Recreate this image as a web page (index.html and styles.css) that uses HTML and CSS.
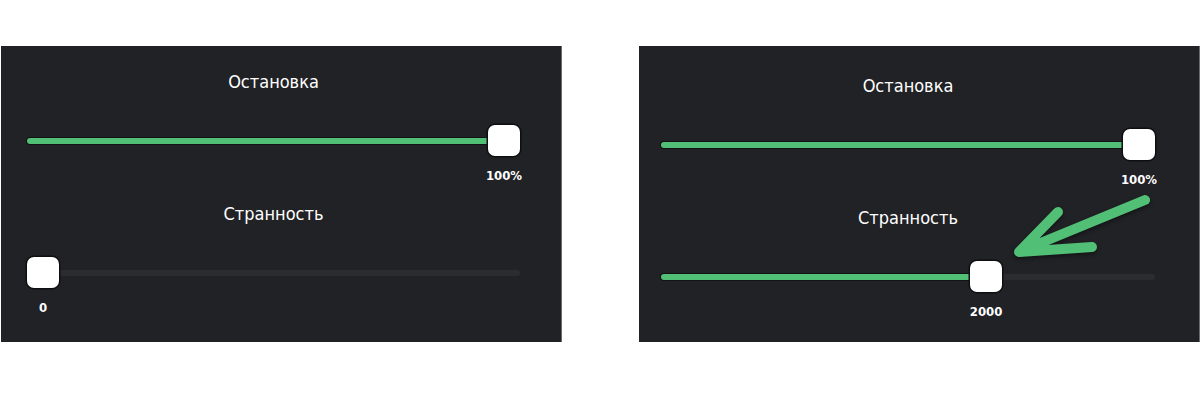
FILE: index.html
```html
<!DOCTYPE html>
<html>
<head>
    <meta charset="utf-8">
    <title>Настройки</title>
    <link rel="stylesheet" href="styles.css">
</head>
<body>

<div class="shots">
    <!-- до -->
    <div class="panel panel-left">
        <div class="setting">
            <div class="title">Остановка</div>
            <div class="slider">
                <div class="track"><div class="fill" style="width: 100%"></div></div>
                <div class="handle" style="left: calc((100% - 32px) * 1)">
                    <div class="thumb"></div>
                    <div class="value">100%</div>
                </div>
            </div>
        </div>
        <div class="setting">
            <div class="title">Странность</div>
            <div class="slider">
                <div class="track"><div class="fill" style="width: 0%"></div></div>
                <div class="handle" style="left: calc((100% - 32px) * 0)">
                    <div class="thumb"></div>
                    <div class="value">0</div>
                </div>
            </div>
        </div>
    </div>

    <!-- после -->
    <div class="panel panel-right">
        <div class="setting">
            <div class="title">Остановка</div>
            <div class="slider">
                <div class="track"><div class="fill" style="width: 100%"></div></div>
                <div class="handle" style="left: calc((100% - 32px) * 1)">
                    <div class="thumb"></div>
                    <div class="value">100%</div>
                </div>
            </div>
        </div>
        <div class="setting">
            <div class="title">Странность</div>
            <div class="slider">
                <div class="track"><div class="fill" style="width: 66.9%"></div></div>
                <div class="handle" style="left: calc((100% - 32px) * 0.669)">
                    <div class="thumb"></div>
                    <div class="value">2000</div>
                </div>
            </div>
        </div>

        <svg class="arrow" width="150" height="70" viewBox="0 0 150 70">
            <path d="M136 9 L12 60 M49 21 L10 61 L83 56" fill="none" stroke="#52bf76"
                  stroke-width="10" stroke-linecap="round" stroke-linejoin="round"/>
        </svg>
    </div>
</div>

</body>
</html>
```

FILE: styles.css
```css
/* страница */
body {
    margin: 0;
    background: #fff;
    font-family: "Liberation Sans Narrow", "DejaVu Sans Condensed", "Liberation Sans", sans-serif;
}

.shots {
    display: flex;
    gap: 77px;
    padding-top: 46px;
    padding-left: 1px;
}

.panel {
    position: relative;
    box-sizing: border-box;
    width: 561px;
    height: 296px;
    background: #212226;
    border-right: 1px solid #6a6a6e;
}

.panel-left {
    padding: 26px 41px 0 26px;
}

.panel-right {
    padding: 30px 44px 0 22px;
}

.setting {
    margin-bottom: 20px;
}

.title {
    color: #fff;
    font-size: 18px;
    font-stretch: condensed;
    line-height: 20px;
    text-align: center;
    margin-bottom: 33px;
}

.slider {
    position: relative;
    box-sizing: border-box;
    height: 59px;
    padding-top: 13px;
}

.track {
    height: 6px;
    border-radius: 3px;
    background: #2b2c30;
}

.fill {
    height: 100%;
    border-radius: 3px;
    background: #52bf76;
    box-shadow: 0 0 0 1px #121214;
}

.handle {
    position: absolute;
    top: 0;
    width: 32px;
    display: flex;
    flex-direction: column;
    align-items: center;
    gap: 13px;
}

.thumb {
    width: 32px;
    height: 31px;
    border-radius: 7px;
    background: #fff;
    box-shadow: 0 0 0 1.5px #0e0e10;
}

.value {
    color: #fff;
    font-size: 13px;
    font-weight: bold;
    font-stretch: condensed;
    line-height: 14px;
    white-space: nowrap;
}

.arrow {
    position: absolute;
    left: 370px;
    top: 145px;
    filter: drop-shadow(0 2px 2px rgba(0, 0, 0, 0.45));
}
```
